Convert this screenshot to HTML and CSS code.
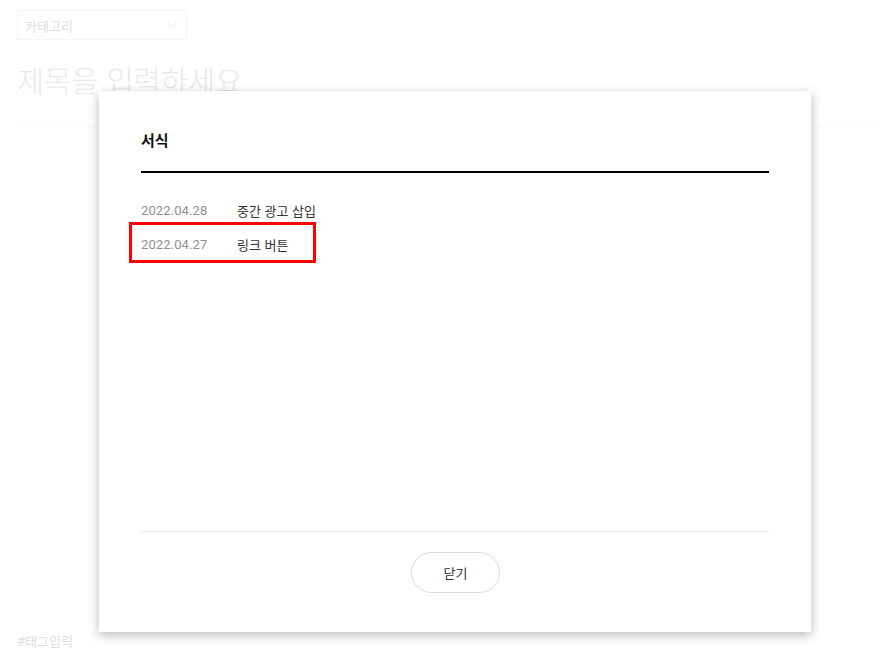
FILE: index.html
```html
<!DOCTYPE html>
<html lang="ko">
<head>
<meta charset="utf-8">
<link rel="stylesheet" href="styles.css">
</head>
<body>
<div class="editor">
  <div class="category">
    <span>카테고리</span>
    <svg class="chev" width="9" height="6" viewBox="0 0 9 6"><path d="M0.5 0.8 L4.5 4.8 L8.5 0.8" fill="none" stroke="#e6e6e6" stroke-width="1"/></svg>
  </div>
  <div class="title-input">제목을 입력하세요</div>
  <div class="body-area"></div>
  <div class="tags">#태그입력</div>
</div>

<div class="modal">
  <div class="modal-head">서식</div>
  <ul class="tpl-list">
    <li class="tpl-row"><span class="date">2022.04.28</span><span class="name">중간 광고 삽입</span></li>
    <li class="tpl-row highlighted"><span class="date">2022.04.27</span><span class="name">링크 버튼</span><span class="mark"></span></li>
  </ul>
  <div class="modal-foot">
    <button class="close-btn">닫기</button>
  </div>
</div>
</body>
</html>
```

FILE: styles.css
```css
html, body {
  margin: 0;
  padding: 0;
  background: #fff;
  font-family: Roboto, "Noto Sans CJK KR", sans-serif;
  width: 894px;
  height: 657px;
  overflow: hidden;
}
.editor {
  position: relative;
  padding: 10px 17px 0 17px;
  height: 647px;
  display: flex;
  flex-direction: column;
}
.category {
  height: 28px;
  border: 1px solid #f5f5f5;
  display: flex;
  align-items: center;
  justify-content: space-between;
  padding: 0 9px 0 0;
  width: 159px;
}
.category span {
  font-size: 13px;
  color: #dedede;
  padding-left: 7px;
}
.title-input {
  margin-top: 20px;
  font-size: 29.5px;
  font-weight: 300;
  color: #e9e9e9;
  line-height: 38px;
  font-family: "Noto Sans CJK KR", sans-serif;
  padding-bottom: 28px;
  border-bottom: 1px solid #f7f7f7;
  width: 860px;
}
.body-area { flex: 1; }
.tags {
  font-size: 13px;
  color: #dcdfe3;
  line-height: 20px;
  padding-bottom: 5px;
}
.modal {
  position: absolute;
  left: 99px;
  top: 91px;
  width: 712px;
  height: 541px;
  background: #fff;
  box-shadow: 0 3px 10px rgba(0,0,0,0.28);
  box-sizing: border-box;
  padding: 0 42px;
  display: flex;
  flex-direction: column;
}
.modal-head {
  padding: 38px 0 20px;
  line-height: 22px;
  font-size: 15px;
  font-weight: 700;
  color: #111;
  border-bottom: 2px solid #000;
  font-family: "Noto Sans CJK KR", sans-serif;
}
.tpl-list {
  list-style: none;
  margin: 0;
  padding: 21px 0 0;
  flex: 1;
}
.tpl-row {
  position: relative;
  display: flex;
  line-height: 34px;
  height: 34px;
  font-size: 13px;
}
.tpl-row .date {
  width: 96px;
  color: #8f8f8f;
  letter-spacing: 0.1px;
}
.tpl-row .name {
  color: #333;
  font-family: "Noto Sans CJK KR", sans-serif;
}
.mark {
  position: absolute;
  left: -12px;
  top: -6px;
  width: 187px;
  height: 41px;
  border: 3px solid #f00;
  box-sizing: border-box;
}
.modal-foot {
  border-top: 1px solid #e9e9e9;
  padding: 20px 0 39px;
  display: flex;
  justify-content: center;
}
.close-btn {
  width: 89px;
  height: 41px;
  border: 1px solid #dcdcdc;
  border-radius: 21px;
  background: #fff;
  font-size: 13px;
  color: #333;
  font-family: "Noto Sans CJK KR", sans-serif;
  padding: 0;
  margin-left: 1px;
}
```
